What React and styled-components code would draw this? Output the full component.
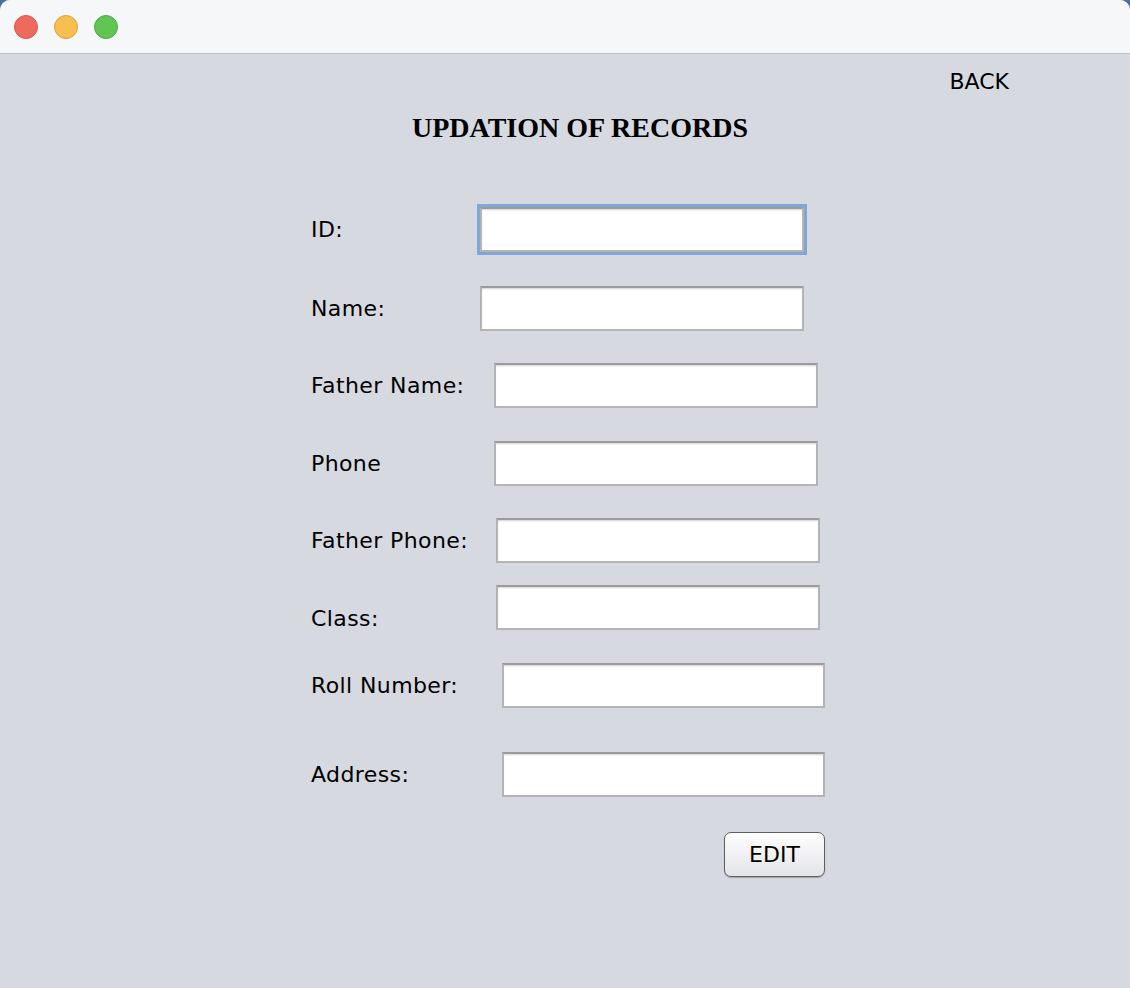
import styled, { createGlobalStyle } from 'styled-components';

const GlobalStyle = createGlobalStyle`
  html, body {
    margin: 0;
    padding: 0;
    background: #4c6da3;
  }
`;

const fields = [
  { label: 'ID:', gap: 0, labelWidth: 169, focused: true },
  { label: 'Name:', gap: 34, labelWidth: 169 },
  { label: 'Father Name:', gap: 32, labelWidth: 183 },
  { label: 'Phone', gap: 33, labelWidth: 183 },
  { label: 'Father Phone:', gap: 32, labelWidth: 185 },
  { label: 'Class:', gap: 22, labelWidth: 185, low: true },
  { label: 'Roll Number:', gap: 33, labelWidth: 191 },
  { label: 'Address:', gap: 44, labelWidth: 191 },
];

function App() {
  return (
    <>
      <GlobalStyle />
      <Window>
        <TitleBar>
          <Light color="#ee6a5f" edge="#d8574c" />
          <Light color="#f6bf4f" edge="#dca236" />
          <Light color="#61c554" edge="#4ea941" />
        </TitleBar>

        <Content>
          <BackRow>
            <BackLink>BACK</BackLink>
          </BackRow>

          <Heading>UPDATION OF RECORDS</Heading>

          <Form>
            {fields.map((f) => (
              <Row key={f.label} gap={f.gap}>
                <Label width={f.labelWidth} low={f.low}>{f.label}</Label>
                <Field focused={f.focused} />
              </Row>
            ))}
            <Actions>
              <EditButton>EDIT</EditButton>
            </Actions>
          </Form>
        </Content>
      </Window>
    </>
  );
}

const Window = styled.div`
  background-color: #d6d9e0;
  border-radius: 10px 10px 0 0;
  display: flex;
  flex-direction: column;
  height: 988px;
  overflow: hidden;
  width: 1130px;
`;

const TitleBar = styled.div`
  align-items: center;
  background-color: #f6f7f9;
  border-bottom: 1px solid #bfc1c6;
  box-sizing: border-box;
  display: flex;
  gap: 16px;
  height: 54px;
  padding-left: 14px;
`;

const Light = styled.span`
  background-color: ${(p) => p.color};
  border: 1px solid ${(p) => p.edge};
  border-radius: 50%;
  box-sizing: border-box;
  height: 24px;
  width: 24px;
`;

const Content = styled.div`
  display: flex;
  flex: 1;
  flex-direction: column;
  font-family: "DejaVu Sans", sans-serif;
`;

const BackRow = styled.div`
  display: flex;
  justify-content: flex-end;
  padding: 15px 121px 0 0;
`;

const BackLink = styled.span`
  color: #000;
  cursor: pointer;
  font-size: 22px;
  line-height: 26px;
`;

const Heading = styled.h1`
  font-family: "Liberation Serif", "Times New Roman", serif;
  font-size: 28px;
  font-weight: bold;
  line-height: 32px;
  margin: 17px 0 0;
  padding-left: 30px;
  text-align: center;
`;

const Form = styled.div`
  display: flex;
  flex-direction: column;
  margin-top: 63px;
  padding-left: 311px;
  width: 514px;
`;

const Row = styled.div`
  align-items: center;
  display: flex;
  margin-top: ${(p) => p.gap}px;
`;

const Label = styled.span`
  align-self: ${(p) => (p.low ? 'flex-end' : 'center')};
  color: #000;
  font-size: 22px;
  letter-spacing: 0.4px;
  line-height: 26px;
  margin-bottom: ${(p) => (p.low ? '-2px' : '0')};
  width: ${(p) => p.width}px;
`;

const Field = styled.div`
  background-color: #fff;
  border: 2px solid #b4b4b4;
  border-top-color: #9b9b9b;
  box-shadow: ${(p) =>
    p.focused
      ? 'inset 0 2px 2px -1px rgba(0,0,0,0.18), 0 0 0 3px #7fa6d6'
      : 'inset 0 2px 2px -1px rgba(0,0,0,0.18)'};
  box-sizing: border-box;
  height: 45px;
  width: 324px;
`;

const Actions = styled.div`
  display: flex;
  justify-content: flex-end;
  margin-top: 35px;
`;

const EditButton = styled.button`
  background: linear-gradient(#fefefe, #f1f1f3 50%, #e3e4e7);
  border: 1.5px solid #5f5f62;
  border-radius: 7px;
  box-shadow: 0 1px 1px rgba(0, 0, 0, 0.25);
  color: #000;
  cursor: pointer;
  font-family: "DejaVu Sans", sans-serif;
  font-size: 22px;
  height: 45px;
  padding: 0;
  width: 101px;
`;

export default App;
